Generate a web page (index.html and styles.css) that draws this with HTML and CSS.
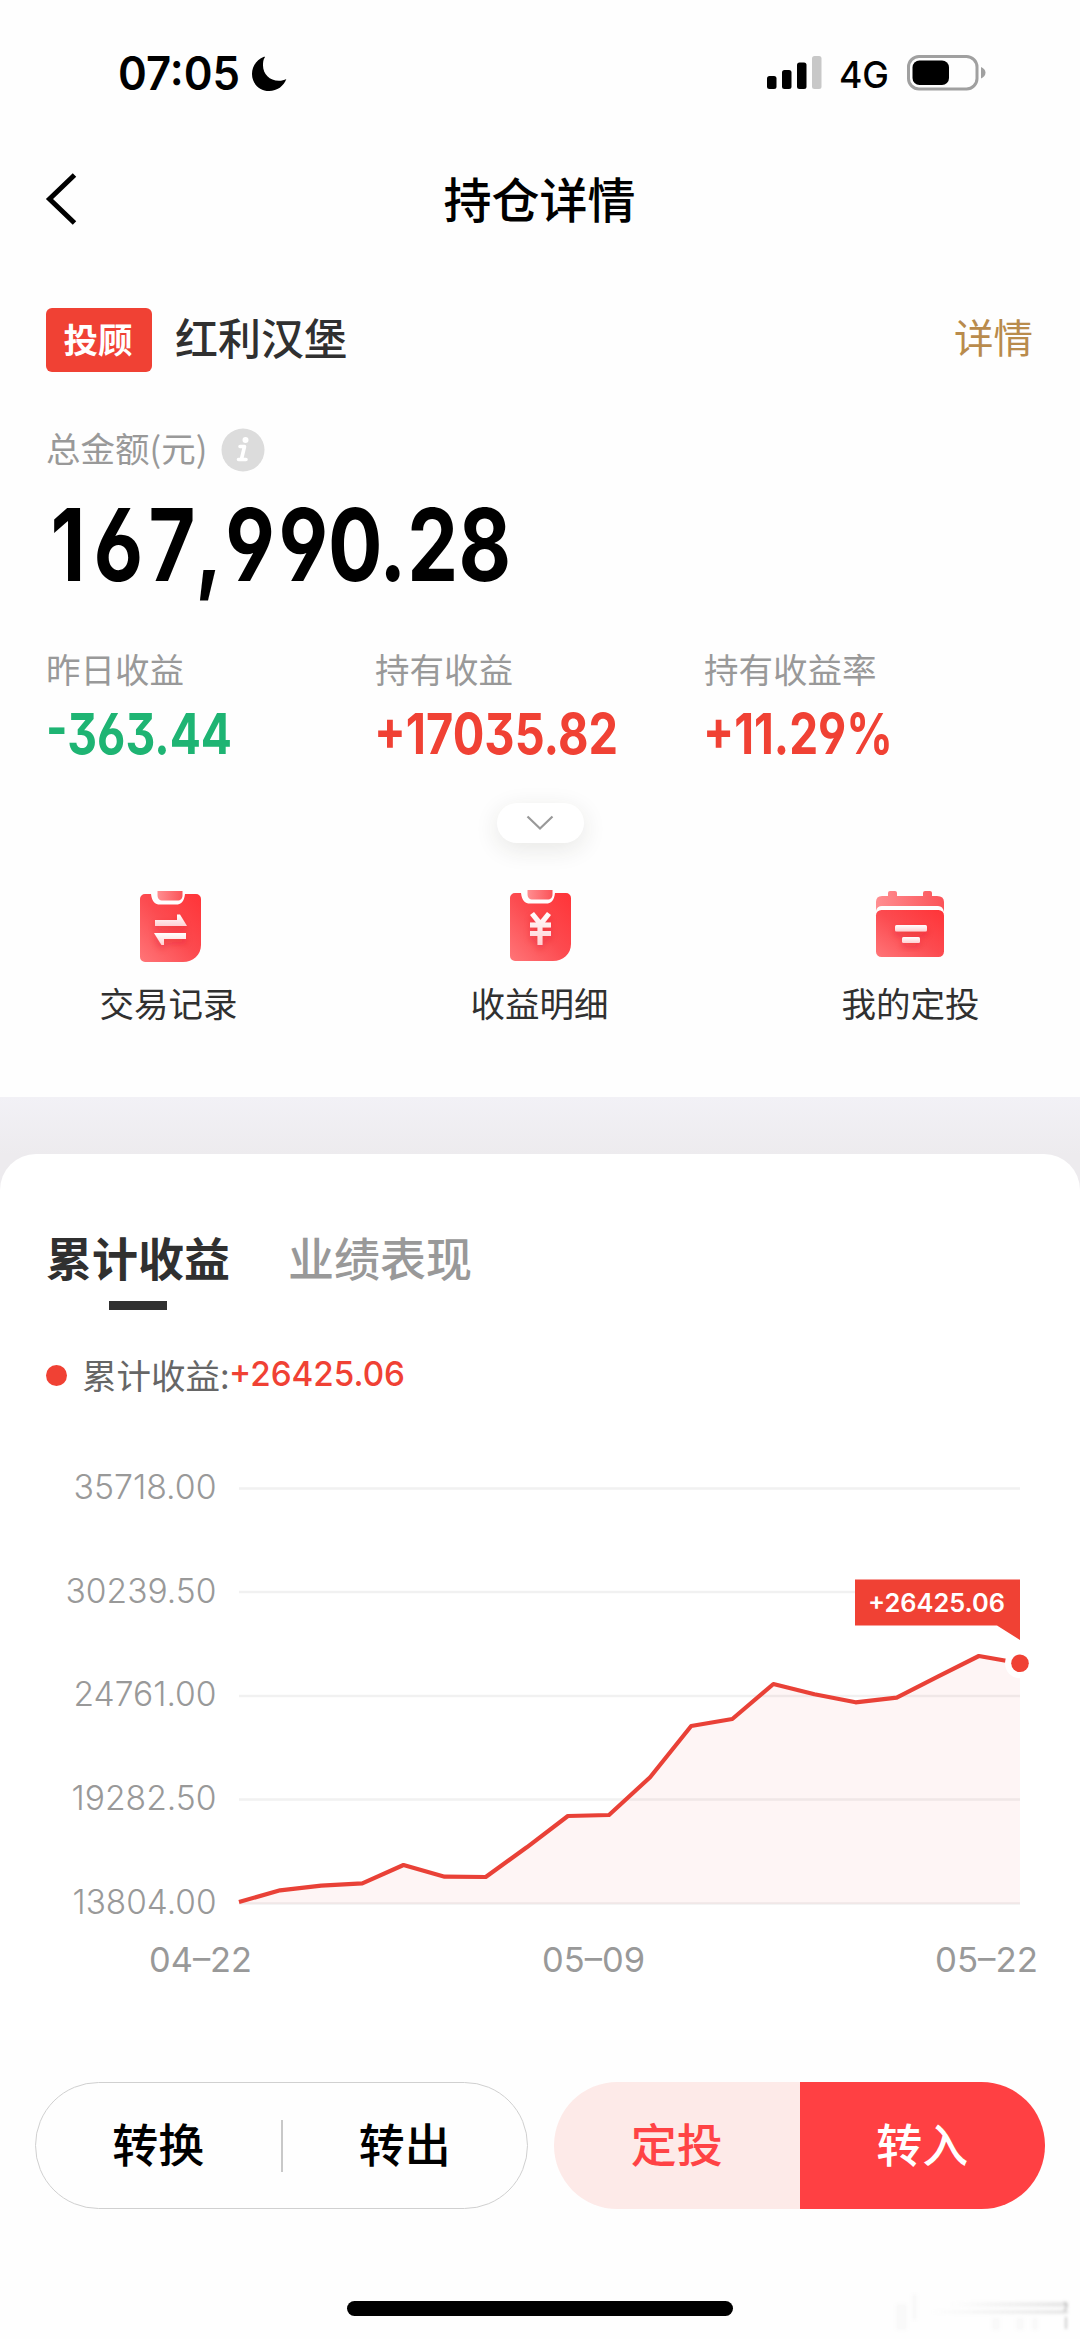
FILE: index.html
```html
<!DOCTYPE html>
<html lang="zh-CN">
<head>
<meta charset="utf-8">
<title>持仓详情</title>
<link rel="stylesheet" href="styles.css">
</head>
<body>
<div class="status">
  <svg class="time" width="122" height="44"><text x="0" y="38" textLength="122" lengthAdjust="spacingAndGlyphs">07:05</text></svg>
  <svg class="moon" width="36" height="36" viewBox="0 0 36 36"><path d="M13 .8C6 3.500 1 10 1 18c0 9.800 7.700 17 17.200 17C26 35 33 30 35.300 23c-2 1.200-4.600 1.800-7.300 1.800C18.500 24.800 12 18 12 9.500c0-3.200.2-6 1.900-8.200.3-.5-.3-.8-.9-.5z"/></svg>
  <svg class="signal" width="56" height="36" viewBox="0 0 56 36"><rect x="0" y="21" width="9.500" height="13" rx="2.500"/><rect x="15" y="15" width="9.500" height="19" rx="2.500"/><rect x="30" y="7.500" width="9.500" height="26.500" rx="2.500"/><rect x="45" y="1" width="9.500" height="33" rx="2.500" fill="#c8c8c8"/></svg>
  <svg class="net" width="52" height="40"><text x="0" y="32" textLength="50" lengthAdjust="spacingAndGlyphs">4G</text></svg>
  <svg class="battery" width="80" height="36" viewBox="0 0 80 36"><rect x="1.500" y="1.500" width="68.500" height="32.500" rx="10.500" fill="none" stroke="#a0a0a0" stroke-width="3"/><rect x="5.500" y="5.500" width="36.500" height="24.500" rx="7"/><path d="M74 12c2.500 1 4.500 3 4.500 5.800s-2 4.800-4.500 5.800z" fill="#a0a0a0"/></svg>
</div>
<header class="nav">
  <svg class="back" width="36" height="56" viewBox="0 0 36 56"><path d="M31.500 4 6.500 28l25 24" fill="none" stroke="#000" stroke-width="5"/></svg>
  <h1>持仓详情</h1>
</header>
<section class="summary">
  <div class="product"><span class="tag">投顾</span><span class="name">红利汉堡</span><a class="detail">详情</a></div>
  <div class="total-label"><span>总金额(元)</span>
    <svg width="44" height="44" viewBox="0 0 44 44"><circle cx="22" cy="22" r="21.500" fill="#dcdcdc"/><circle cx="24.500" cy="12" r="3" fill="#fff"/><path d="M19 18.500h4.500l-3 12.500M17.500 31.500h7.500" fill="none" stroke="#fff" stroke-width="3.600" stroke-linejoin="round" stroke-linecap="round"/></svg>
  </div>
  <svg class="amount" width="480" height="110"><text transform="scale(.8 1)" x="20 83 150 196 247.500 314 379 426 476 541" y="83">167,990.28</text></svg>
  <div class="stats">
    <div class="stat"><span>昨日收益</span><svg width="300" height="60"><text class="down" x="0" y="48" textLength="186" lengthAdjust="spacingAndGlyphs" dy="-3 3">-363.44</text></svg></div>
    <div class="stat"><span>持有收益</span><svg width="300" height="60"><text x="-1" y="48" textLength="244" lengthAdjust="spacingAndGlyphs">+17035.82</text></svg></div>
    <div class="stat"><span>持有收益率</span><svg width="300" height="60"><text x="-1" y="48" textLength="190" lengthAdjust="spacingAndGlyphs">+11.29%</text></svg></div>
  </div>
  <div class="expand"><svg width="28" height="16" viewBox="0 0 28 16"><path d="m1.500 1.500 12.500 12 12.500-12" fill="none" stroke="#999" stroke-width="2.200"/></svg></div>
  <svg width="0" height="0" class="defs"><defs>
    <linearGradient id="body" x1="1" y1="0" x2="0" y2="1"><stop offset="0" stop-color="#ff3438"/><stop offset=".5" stop-color="#fc4b50"/><stop offset="1" stop-color="#ff7578"/></linearGradient>
    <linearGradient id="clip" x1="0" y1="0" x2="1" y2="0"><stop offset="0" stop-color="#ff8e91"/><stop offset="1" stop-color="#fb5358"/></linearGradient>
    <linearGradient id="glyph" x1="0" y1="0" x2="0" y2="1"><stop offset="0" stop-color="#fff"/><stop offset="1" stop-color="#ffd0d2"/></linearGradient>
    <filter id="drop" x="-50%" y="-50%" width="200%" height="200%"><feDropShadow dx="0" dy="4" stdDeviation="3.500" flood-color="#d81c25" flood-opacity=".4"/></filter>
  </defs></svg>
  <div class="actions">
    <div class="action"><svg class="sheet" width="72" height="74" viewBox="0 0 72 74"><path d="M10 3h6c1 8 4 10.500 9 10.500h16c5 0 8-2.500 9-10.500h11a5 5 0 0 1 5 5v46c0 10-8 17-18 17H10a5 5 0 0 1-5-5V8a5 5 0 0 1 5-5z" fill="url(#body)"/><path d="M22.500 0H47.500V4c0 4-2 5.500-5 5.500H28c-4 0-5.500-2-5.500-5.500z" fill="url(#clip)"/><g fill="url(#glyph)" filter="url(#drop)"><path d="M20 29h22v-5.500h3L52 35H20z"/><path d="M51 42v6H29v6h-2.500L19 42z"/></g></svg><span>交易记录</span></div>
    <div class="action"><svg class="sheet middle" width="72" height="74" viewBox="0 0 72 74"><path d="M10 2h6c1 8 4 10.500 9 10.500h16c5 0 8-2.500 9-10.500h11a5 5 0 0 1 5 5v46c0 10-8 17-18 17H10a5 5 0 0 1-5-5V7a5 5 0 0 1 5-5z" fill="url(#body)"/><path d="M22.500-1H47.500V3c0 4-2 5.500-5 5.500H28c-4 0-5.500-2-5.500-5.500z" fill="url(#clip)"/><path filter="url(#drop)" fill="url(#glyph)" d="m25 24 4-3 6.500 8 6.500-8 4 3-6 7.500h6v5h-8.500v3.500H46v5h-8.500V54h-5v-9H25v-5h7.500v-3.500H25v-5h6z"/></svg><span>收益明细</span></div>
    <div class="action"><svg class="calendar" width="72" height="74" viewBox="0 0 72 74"><path d="M13 5V2q0-2 2-2h5q2 0 2 2v3h26V2q0-2 2-2h5q2 0 2 2v3h5q7 0 7 6v10q-1-6-6-6H7q-5 0-6 5v-9q0-6 6-6z" fill="url(#clip)"/><rect x="1" y="19" width="68" height="47" rx="5.500" fill="url(#body)"/><g fill="url(#glyph)" filter="url(#drop)"><rect x="20" y="34" width="32" height="6.500" rx="1.500"/><rect x="27" y="46" width="18" height="6" rx="1.500"/></g></svg><span>我的定投</span></div>
  </div>
</section>
<div class="band"></div>
<main class="card">
  <div class="tabs"><span class="tab active">累计收益</span><span class="tab">业绩表现</span></div>
  <div class="legend"><i></i><span>累计收益:</span><svg width="190" height="50"><text x="0" y="36" textLength="176" lengthAdjust="spacingAndGlyphs">+26425.06</text></svg></div>
  <svg class="chart" width="1080" height="560" viewBox="0 1440 1080 560">
    <path d="M239 1488.500H1020M239 1592H1020M239 1696H1020M239 1799.500H1020M239 1903.500H1020" stroke="#f1f1f1" stroke-width="2.500"/>
    <path class="area" d="M239 1902 280.100 1890.300 321.200 1885.700 362.300 1883.300 403.500 1865 444.600 1876.700 485.700 1877 526.800 1847.300 567.900 1816 609 1815 650.100 1777.300 691.200 1726 732.300 1719 773.400 1684 814.500 1694.300 855.600 1702.300 896.700 1697.700 937.800 1676.700 978.900 1656 1020 1663.300V1904H239z"/>
    <polyline class="line" points="239,1902 280.100,1890.300 321.200,1885.700 362.300,1883.300 403.500,1865 444.600,1876.700 485.700,1877 526.800,1847.300 567.900,1816 609,1815 650.100,1777.300 691.200,1726 732.300,1719 773.400,1684 814.500,1694.300 855.600,1702.300 896.700,1697.700 937.800,1676.700 978.900,1656 1020,1663.300"/>
    <circle cx="1020" cy="1663.300" r="15" fill="#fff"/><circle cx="1020" cy="1663.300" r="8.800" fill="#f04134"/>
    <path d="M855 1579.500H1020V1640L997 1625.500H855z" fill="#f04134"/>
    <text class="tip" x="868" y="1612" textLength="137" lengthAdjust="spacingAndGlyphs">+26425.06</text>
    <g class="ylabels">
      <text x="73.500" y="1499" textLength="143" lengthAdjust="spacingAndGlyphs">35718.00</text>
      <text x="65.500" y="1603" textLength="151" lengthAdjust="spacingAndGlyphs">30239.50</text>
      <text x="73.500" y="1706" textLength="143" lengthAdjust="spacingAndGlyphs">24761.00</text>
      <text x="71.500" y="1810" textLength="145" lengthAdjust="spacingAndGlyphs">19282.50</text>
      <text x="72.500" y="1913.500" textLength="144" lengthAdjust="spacingAndGlyphs">13804.00</text>
    </g>
    <g class="xlabels">
      <text x="149" y="1972" textLength="103" lengthAdjust="spacingAndGlyphs">04–22</text>
      <text x="542" y="1972" textLength="103" lengthAdjust="spacingAndGlyphs">05–09</text>
      <text x="935" y="1972" textLength="103" lengthAdjust="spacingAndGlyphs">05–22</text>
    </g>
  </svg>
</main>
<footer class="footer">
  <div class="pair outline"><button>转换</button><i></i><button>转出</button></div>
  <div class="pair filled"><button class="soft">定投</button><button class="solid">转入</button></div>
</footer>
<div class="home"></div>
<svg class="smudge" width="190" height="44" viewBox="0 0 190 44">
  <defs>
    <linearGradient id="fade"><stop offset="0" stop-color="#aaa" stop-opacity="0"/><stop offset="1" stop-color="#aaa" stop-opacity=".28"/></linearGradient>
    <filter id="soft"><feGaussianBlur stdDeviation="1.600"/></filter>
  </defs>
  <g filter="url(#soft)"><rect x="60" y="10" width="118" height="5" fill="url(#fade)"/><rect x="40" y="18" width="138" height="4" fill="url(#fade)"/><path d="M6 12h11v26H6zM22 2h5v26h-5zM102 26h8v12h-8zM126 26h8v12h-8zM142 26h6v12h-6z" fill="#999" opacity=".05"/><path d="M174 10q5 4 0 9M176 25v12" stroke="#999" stroke-width="2" fill="none" opacity=".5"/></g>
</svg>
</body>
</html>
```
FILE: styles.css
```css
* { box-sizing: border-box; }
body { margin: 0; width: 1080px; height: 2339px; overflow: hidden; background: #fefefe; color: #303030; font-family: Inter, "Noto Sans CJK SC", sans-serif; display: flex; flex-direction: column; position: relative; }
svg { display: block; flex: none; overflow: visible; }
.defs { position: absolute; }
h1 { margin: 0; }
span, a, h1, button { font-family: "Noto Sans CJK SC", sans-serif; white-space: nowrap; }

.status { height: 146px; padding: 52px 0 0 118px; display: flex; align-items: flex-start; }
.time text { font: 600 46px Inter, sans-serif; }
.moon { margin: 4px 0 0 11px; }
.signal { margin: 3px 0 0 480px; }
.net { margin: 4px 0 0 16px; }
.net text { font: 500 37px Inter, sans-serif; }
.battery { margin: 3px 0 0 16px; }

.nav { height: 106px; display: flex; align-items: center; padding-left: 43px; }
.back { margin-right: -80px; }
.nav h1 { flex: 1; padding-bottom: 4px; text-align: center; font-size: 48px; font-weight: 500; line-height: 60px; color: #000; }

.summary { height: 845px; padding: 56px 46px 0; display: flex; flex-direction: column; flex: none; }
.product { height: 64px; display: flex; align-items: center; }
.tag { width: 106px; height: 64px; padding-right: 2px; border-radius: 6px; background: #f04134; color: #fff; font-size: 34.500px; font-weight: 700; line-height: 60px; text-align: center; }
.name { margin-left: 23px; padding-bottom: 8px; font-size: 43px; font-weight: 500; line-height: 56px; }
.detail { margin-left: auto; padding: 0 1px 8px 0; font-size: 39.500px; line-height: 56px; color: #b98b4c; }
.total-label { height: 44px; margin-top: 56px; display: flex; align-items: center; gap: 14px; font-size: 34.500px; color: #999; }
.total-label span { width: 161px; line-height: 38px; padding-bottom: 6px; }
.amount { margin: 26px 0 0 6px; }
.amount text { font: 700 101px Inter, sans-serif; font-feature-settings: "cv03", "cv04", "cv09"; text-anchor: middle; fill: #000; }
.stats { display: grid; grid-template-columns: 329px 329px 1fr; height: 116px; margin-top: 35px; }
.stat span { display: block; font-size: 34.500px; line-height: 50px; height: 63px; color: #999; }
.stat text { font: 700 56px Inter, sans-serif; font-feature-settings: "cv03", "cv04", "cv09"; fill: #f04134; }
.stat .down { fill: #1eb473; }
.expand { width: 87px; height: 40px; margin: 44px auto 0; border-radius: 20px; background: #fff; box-shadow: 0 6px 24px rgba(50,45,30,.11); display: flex; align-items: center; justify-content: center; }
.actions { display: grid; grid-template-columns: repeat(3, 371px); margin: 48px -17px 0 -63px; }
.action { display: flex; flex-direction: column; align-items: center; font-size: 34.500px; line-height: 50px; }
.action span { margin-top: 12px; }
.sheet { margin-left: 4px; }
.sheet.middle { margin-left: 3px; }

.band { height: 102px; margin-bottom: -45px; flex: none; background: linear-gradient(#f2f1f6, #edebee 58px); }
.card { height: 886px; flex: none; border-radius: 36px 36px 0 0; background: #fff; display: flex; flex-direction: column; position: relative; }
.tabs { height: 157px; padding: 70px 0 0 46px; display: flex; gap: 58px; }
.tab { position: relative; height: 86px; font-size: 46px; line-height: 64px; font-weight: 500; color: #999; }
.tab.active { color: #303030; font-weight: 700; }
.tab.active::after { content: ""; position: absolute; left: 63px; bottom: 0; width: 58px; height: 9px; background: #303030; }
.legend { height: 50px; margin-top: 39px; padding-left: 46px; display: flex; align-items: center; color: #666; font-size: 34.500px; line-height: 46px; }
.legend i { width: 21px; height: 21px; border-radius: 50%; background: #f04134; margin-right: 15px; }
.legend span { width: 147px; padding-bottom: 3px; }
.legend text { font: 500 34.500px Inter, sans-serif; fill: #f04134; }
.chart { margin-top: 40px; }
.area { fill: rgba(240,65,52,.05); }
.line { fill: none; stroke: #e94137; stroke-width: 4.200; stroke-linejoin: round; }
.tip { font: 600 25px Inter, sans-serif; fill: #fff; }
.ylabels { font: 290 34.500px Inter, sans-serif; fill: #999; }
.xlabels { font: 400 34.500px Inter, sans-serif; fill: #999; }

.footer { height: 127px; margin-top: 42px; padding: 0 35px; display: flex; gap: 26px; flex: none; }
.pair { width: 493px; height: 127px; border-radius: 64px; display: flex; align-items: center; overflow: hidden; }
.filled { width: 491px; }
.outline { border: 1.500px solid #d0d0d0; }
.pair i { width: 2px; height: 52px; background: #c8c8c8; }
.pair button { flex: 1; height: 127px; padding: 0 0 8px; border: 0; background: none; color: #000; font-size: 46px; font-weight: 500; }
.pair .soft { background: #fdeae8; color: #ff4345; }
.pair .solid { background: #ff4043; color: #fff; }
.home { width: 386px; height: 15px; border-radius: 8px; margin: 92px 0 0 347px; background: #000; flex: none; }
.smudge { position: absolute; left: 890px; top: 2292px; }
```
